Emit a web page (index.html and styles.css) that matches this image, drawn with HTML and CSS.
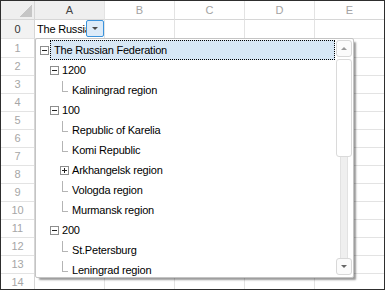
FILE: index.html
```html
<!DOCTYPE HTML>
<html>
    <head>
        <meta charset="UTF-8">
        <title>Region list</title>
        <link rel="stylesheet" href="styles.css">
    </head>
    <body>
        <div id="sheet">
            <!--列标题-->
            <div class="row head">
                <div class="rh corner"></div>
                <div class="cell sel">A</div>
                <div class="cell">B</div>
                <div class="cell">C</div>
                <div class="cell">D</div>
                <div class="cell">E</div>
            </div>
            <!--编辑中的单元格-->
            <div class="row first">
                <div class="rh sel">0</div>
                <div class="cell edit"><span class="val">The Russian Federation</span><span class="dd"></span></div>
                <div class="cell"></div><div class="cell"></div><div class="cell"></div><div class="cell"></div>
            </div>
            <div class="row"><div class="rh">1</div><div class="cell"></div><div class="cell"></div><div class="cell"></div><div class="cell"></div><div class="cell"></div></div>
            <div class="row"><div class="rh">2</div><div class="cell"></div><div class="cell"></div><div class="cell"></div><div class="cell"></div><div class="cell"></div></div>
            <div class="row"><div class="rh">3</div><div class="cell"></div><div class="cell"></div><div class="cell"></div><div class="cell"></div><div class="cell"></div></div>
            <div class="row"><div class="rh">4</div><div class="cell"></div><div class="cell"></div><div class="cell"></div><div class="cell"></div><div class="cell"></div></div>
            <div class="row"><div class="rh">5</div><div class="cell"></div><div class="cell"></div><div class="cell"></div><div class="cell"></div><div class="cell"></div></div>
            <div class="row"><div class="rh">6</div><div class="cell"></div><div class="cell"></div><div class="cell"></div><div class="cell"></div><div class="cell"></div></div>
            <div class="row"><div class="rh">7</div><div class="cell"></div><div class="cell"></div><div class="cell"></div><div class="cell"></div><div class="cell"></div></div>
            <div class="row"><div class="rh">8</div><div class="cell"></div><div class="cell"></div><div class="cell"></div><div class="cell"></div><div class="cell"></div></div>
            <div class="row"><div class="rh">9</div><div class="cell"></div><div class="cell"></div><div class="cell"></div><div class="cell"></div><div class="cell"></div></div>
            <div class="row"><div class="rh">10</div><div class="cell"></div><div class="cell"></div><div class="cell"></div><div class="cell"></div><div class="cell"></div></div>
            <div class="row"><div class="rh">11</div><div class="cell"></div><div class="cell"></div><div class="cell"></div><div class="cell"></div><div class="cell"></div></div>
            <div class="row"><div class="rh">12</div><div class="cell"></div><div class="cell"></div><div class="cell"></div><div class="cell"></div><div class="cell"></div></div>
            <div class="row"><div class="rh">13</div><div class="cell"></div><div class="cell"></div><div class="cell"></div><div class="cell"></div><div class="cell"></div></div>
            <div class="row"><div class="rh">14</div><div class="cell"></div><div class="cell"></div><div class="cell"></div><div class="cell"></div><div class="cell"></div></div>

            <!--下拉树-->
            <div class="popup">
                <ul class="tree">
                    <li class="node l0"><i class="exp"></i><span class="txt active">The Russian Federation</span></li>
                    <li class="node l1"><i class="exp"></i><span class="txt">1200</span></li>
                    <li class="node l2"><i class="leaf"></i><span class="txt">Kaliningrad region</span></li>
                    <li class="node l1"><i class="exp"></i><span class="txt">100</span></li>
                    <li class="node l2"><i class="leaf"></i><span class="txt">Republic of Karelia</span></li>
                    <li class="node l2"><i class="leaf"></i><span class="txt">Komi Republic</span></li>
                    <li class="node l2"><i class="exp plus"></i><span class="txt">Arkhangelsk region</span></li>
                    <li class="node l2"><i class="leaf"></i><span class="txt">Vologda region</span></li>
                    <li class="node l2"><i class="leaf"></i><span class="txt">Murmansk region</span></li>
                    <li class="node l1"><i class="exp"></i><span class="txt">200</span></li>
                    <li class="node l2"><i class="leaf"></i><span class="txt">St.Petersburg</span></li>
                    <li class="node l2"><i class="leaf"></i><span class="txt">Leningrad region</span></li>
                </ul>
                <div class="sbar">
                    <div class="sbtn up"></div>
                    <div class="thumb"></div>
                    <div class="track"></div>
                    <div class="sbtn down"></div>
                </div>
            </div>
        </div>
    </body>
</html>
```

FILE: styles.css
```css
body{margin:0;font-family:"Liberation Sans",Arial,sans-serif;font-size:11px;}
ul,li{margin:0;padding:0;list-style:none;}
i{font-style:normal;}
#sheet{
    position:relative;
    width:385px;
    height:290px;
    box-sizing:border-box;
    border:1px solid #2e2e2e;
    overflow:hidden;
    background:#fff;
}
/*表格*/
.row{
    display:grid;
    grid-template-columns:34px repeat(5,70px);
    height:18px;
}
.row.head,.row.first{height:19px;}
.row > div{
    box-sizing:border-box;
    border-right:1px solid #e3e3e3;
    border-bottom:1px solid #e3e3e3;
}
.row .rh{
    border-right-color:#d6d6d6;
    text-align:center;
    line-height:18px;
    color:#a6a6a6;
}
.head > div{
    border-bottom-color:#d6d6d6;
    line-height:18px;
    text-align:center;
    color:#a3a3a3;
}
.head .sel{background:#efefef;color:#444;}
.rh.sel{background:#f2f2f2;color:#333;}
.corner{
    background:linear-gradient(to bottom right,transparent 50%,#c6c6c6 50%) no-repeat right 2px bottom 2px / 12px 12px,#efefef;
}
.edit{
    display:flex;
    align-items:flex-start;
    overflow:hidden;
}
.edit .val{
    flex:1;
    overflow:hidden;
    white-space:nowrap;
    padding-left:2px;
    line-height:18px;
    letter-spacing:-0.2px;
    color:#000;
}
.edit .dd{
    flex:none;
    width:18px;
    height:17px;
    box-sizing:border-box;
    border:1px solid #3b93dc;
    border-radius:2px;
    background:#dcebf9;
    display:flex;
    align-items:center;
    justify-content:center;
}
.edit .dd::before{
    content:"";
    border-left:3px solid transparent;
    border-right:3px solid transparent;
    border-top:3px solid #4a4a4a;
}
/*下拉框*/
.popup{
    position:absolute;
    left:34px;
    top:37px;
    width:319px;
    height:240px;
    box-sizing:border-box;
    display:flex;
    border:1px solid #c4c4c4;
    border-radius:2px;
    background:#fff;
    box-shadow:3px 3px 2px -1px rgba(0,0,0,.4);
}
.tree{
    flex:1;
    padding-top:1px;
    overflow:hidden;
}
.node{
    display:flex;
    align-items:center;
    height:20px;
    white-space:nowrap;
    color:#000;
}
.l0{padding-left:4px;}
.l1{padding-left:14px;}
.l2{padding-left:24px;}
.exp{
    flex:none;
    position:relative;
    width:9px;
    height:9px;
    box-sizing:border-box;
    border:1px solid #8e8e8e;
    background:#fff;
}
.exp::before{
    content:"";
    position:absolute;
    left:1px;
    top:3px;
    width:5px;
    height:1px;
    background:#222;
}
.exp.plus::after{
    content:"";
    position:absolute;
    left:3px;
    top:1px;
    width:1px;
    height:5px;
    background:#222;
}
.leaf{
    flex:none;
    align-self:flex-start;
    width:5px;
    height:10px;
    margin:1px 1px 0 2px;
    border-left:1px solid #b4b4b4;
    border-bottom:1px solid #b4b4b4;
}
.txt{
    border:1px dotted transparent;
    padding:1px 3px 0 2px;
    line-height:17px;
    letter-spacing:-0.2px;
}
.txt.active{
    flex:1;
    margin:0 1px;
    padding-left:3px;
    background:#d7e7f5;
    border-color:#000;
}
/*滚动条*/
.sbar{
    flex:none;
    display:flex;
    flex-direction:column;
    width:16px;
    margin:1px 1px 2px 0;
}
.sbtn{
    flex:none;
    height:17px;
    box-sizing:border-box;
    border:1px solid #d8d8d8;
    border-radius:3px;
    background:#fbfbfb;
    display:flex;
    align-items:center;
    justify-content:center;
}
.sbtn::before{
    content:"";
    border-left:3px solid transparent;
    border-right:3px solid transparent;
}
.up::before{border-bottom:3px solid #999;}
.down::before{border-top:3px solid #666;}
.thumb{
    flex:none;
    height:98px;
    margin-top:2px;
    box-sizing:border-box;
    border:1px solid #dadada;
    border-radius:3px;
    background:#fff;
}
.track{
    flex:1;
    width:8px;
    margin:0 auto;
    box-sizing:border-box;
    background:#efefef;
    border-left:1px solid #e2e2e2;
    border-right:1px solid #e2e2e2;
}
```
